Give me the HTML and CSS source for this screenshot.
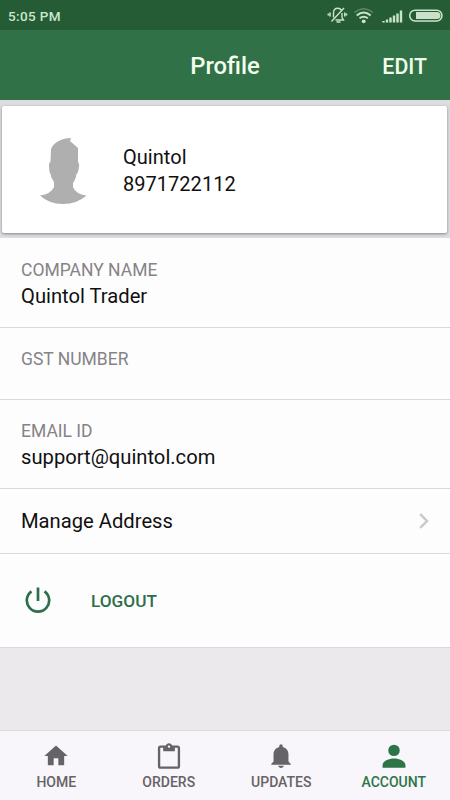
FILE: index.html
```html
<!DOCTYPE html>
<html lang="en">
<head>
<meta charset="utf-8">
<meta name="viewport" content="width=device-width, initial-scale=1">
<title>Profile</title>
<link rel="stylesheet" href="styles.css">
</head>
<body>
<div class="app">
  <div class="status">
    <span class="time">5:05 PM</span>
    <svg class="status-icons" width="116" height="22" viewBox="0 0 116 22" fill="none" stroke="#c9e4cd">
      <path d="M4.500 17.500L17 4M6.500 13.500V9c0-3 1.800-4.800 4.300-4.800 1.600 0 2.800.7 3.600 1.800M15 9v4.500l1.500 2.500H8.500" stroke-width="1.400"/>
      <path d="M3 8.500v4M1.300 9.500v2M17.800 8.500v4M19.500 9.500v2M9.500 18h4" stroke-width="1.500"/>
      <path d="M27.500 8.500q9.200-7.200 18.400 0" stroke="#548260" stroke-width="1.600"/>
      <path d="M29.700 11.500q7-5.800 14 0M32.500 14.300q4.200-3.300 8.400 0" stroke-width="1.900"/>
      <circle cx="36.700" cy="17.300" r="1.900" fill="#c9e4cd" stroke="none"/>
      <path d="M56.500 18.500v-1.500M60 18.500v-3M63.500 18.500v-5M67 18.500v-7M70.500 18.500v-9M74 18.500V6.500" stroke-width="2.400"/>
      <rect x="82.700" y="6.200" width="32.300" height="10.800" rx="5.400" stroke-width="1.500"/>
      <path d="M89 8.100h21a3.500 3.500 0 0 1 0 7H89z" fill="#cbdfc9" stroke="none"/>
    </svg>
  </div>
  <header class="header">
    <h1 class="title">Profile</h1>
    <span class="edit">EDIT</span>
  </header>
  <main class="main">
    <section class="card">
      <svg class="avatar" width="48" height="68" viewBox="0 0 48 68" fill="#b0afb0">
        <path d="M12 12C15 5 23 1 32 1L31 4L39 11V25Q41 27 39.500 33Q39 36 37.500 37Q36.500 43 34 46V50Q36.500 57 47.500 58.500Q38 67 24 67Q10 67 1 58.500Q12 57 15 50V45Q12 41 11.500 37Q10 35 10 28Q10 25 11.500 25Z"/>
      </svg>
      <div class="person">
        <div>Quintol</div>
        <div class="phone">8971722112</div>
      </div>
    </section>
    <section class="list">
      <div class="row company"><div class="label">COMPANY NAME</div><div class="value">Quintol Trader</div></div>
      <div class="row gst"><div class="label">GST NUMBER</div></div>
      <div class="row email"><div class="label">EMAIL ID</div><div class="value">support@quintol.com</div></div>
      <div class="row link"><span class="value">Manage Address</span>
        <svg width="10" height="16" viewBox="0 0 10 16" fill="none" stroke="#c8c7cc" stroke-width="2.400"><path d="M1.200 1.200L8 8L1.200 14.800"/></svg>
      </div>
      <div class="row logout">
        <svg width="26" height="26" viewBox="0 0 26 26" fill="none" stroke="#2c6f4a" stroke-width="2.700"><path d="M13 .5V14M6.500 4.300a11.200 11.200 0 1 0 13 0"/></svg>
        <span class="logout-text">LOGOUT</span>
      </div>
    </section>
  </main>
  <nav class="tabs">
    <div class="tab"><svg width="28" height="28" viewBox="0 0 24 24" fill="currentColor"><path d="M10 20v-6h4v6h5v-8h3L12 3 2 12h3v8z"/></svg><span>HOME</span></div>
    <div class="tab"><svg width="28" height="28" viewBox="0 0 24 24" fill="currentColor"><path d="M19.500 3h-4.680C14.400 1.840 13.300 1 12 1s-2.400.840-2.820 2H4.500c-1.100 0-2 .9-2 2v16c0 1.100.9 2 2 2h15c1.100 0 2-.9 2-2V5c0-1.100-.9-2-2-2zm-7.500 0c.55 0 1 .45 1 1s-.45 1-1 1-1-.45-1-1 .45-1 1-1zm7.500 18h-15V5H7v3h10V5h2.500z"/></svg><span>ORDERS</span></div>
    <div class="tab"><svg width="28" height="28" viewBox="0 0 24 24" fill="currentColor"><path d="M9.500 20.400h5c-.4 1.200-1.300 1.800-2.500 1.800S9.900 21.600 9.500 20.400zM20.400 19.400v-.6L18.400 16.700V10.600c0-3.300-1.900-5.700-4.900-6.400V3.500a1.500 1.500 0 0 0-3 0v.7C7.500 4.900 5.600 7.300 5.600 10.600v6.100l-2 2.100v.6z"/></svg><span>UPDATES</span></div>
    <div class="tab active"><svg width="28" height="28" viewBox="0 0 24 24" fill="currentColor"><circle cx="12" cy="7.200" r="4.900"/><path d="M2.200 22v-2.200c0-3.800 6.500-5.600 9.800-5.600s9.800 1.800 9.800 5.600V22z"/></svg><span>ACCOUNT</span></div>
  </nav>
</div>
</body>
</html>
```
FILE: styles.css
```css
* { box-sizing: border-box; }
body { margin: 0; font-family: Roboto, sans-serif; color: #101010; }
.app { display: flex; flex-direction: column; width: 450px; height: 800px; background: #ebe9ec; overflow: hidden; }
.status { height: 30px; display: flex; align-items: center; justify-content: space-between; padding: 1px 7px 0 8px; background: #265c35; color: #c9e9cd; }
.time { font-size: 13.500px; font-weight: 500; letter-spacing: .35px; }
.status-icons { display: block; margin-top: -1px; }
.header { height: 70px; display: grid; grid-template-columns: 1fr auto 1fr; align-items: center; padding: 2px 23px 0; background: #307148; color: #f3ffec; }
.title { grid-column: 2; margin: 0; font-size: 23.800px; font-weight: 500; }
.edit { justify-self: end; font-size: 21.300px; font-weight: 500; }
.main { flex: 1; padding-top: 6px; background: linear-gradient(#dddce0 0 138px, #ebe9ec 138px); }
.card { height: 127px; margin: 0 3px 5px 2px; padding: 2px 0 0 37px; display: flex; align-items: center; background: #fff; border-radius: 2px; box-shadow: 0 1px 3px rgba(0, 0, 0, .4); }
.avatar { margin-right: 36px; }
.person { font-size: 20px; line-height: 27px; letter-spacing: .03px; }
.list { background: #fefdfe; }
.row { padding: 0 21px; border-bottom: 1px solid #d9d8dc; }
.label { font-size: 17.500px; line-height: 25px; color: #858387; }
.value { font-size: 20.200px; line-height: 27px; }
.company { height: 90px; padding-top: 20px; }
.gst { height: 72px; padding-top: 19px; }
.email { height: 89px; padding-top: 19px; }
.link { height: 65px; display: flex; align-items: center; justify-content: space-between; }
.logout { height: 94px; padding-left: 25px; display: flex; align-items: center; gap: 40px; color: #2c6f4a; }
.logout svg { margin-top: -2px; }
.logout-text { font-size: 17.200px; font-weight: 500; }
.tabs { height: 70px; display: grid; grid-template-columns: repeat(4, 1fr); background: #f8f6fa; border-top: 1px solid #dddbdf; color: #656367; }
.tab { display: flex; flex-direction: column; align-items: center; padding-top: 11px; font-size: 14px; font-weight: 500; line-height: 24px; }
.tab svg { display: block; }
.active { color: #2c7548; }
```
